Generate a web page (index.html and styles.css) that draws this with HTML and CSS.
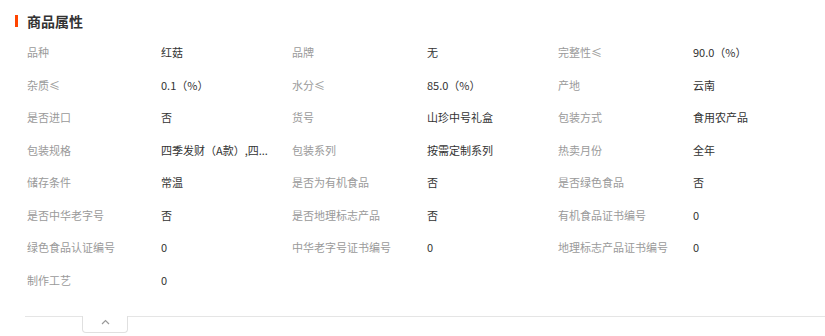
FILE: index.html
```html
<!DOCTYPE html>
<html lang="zh">
<head>
<meta charset="utf-8">
<link rel="stylesheet" href="styles.css">
</head>
<body>
<div class="attrs">
  <h2 class="title">商品属性</h2>
  <div class="grid">
    <div class="k">品种</div><div class="v">红菇</div>
    <div class="k">品牌</div><div class="v">无</div>
    <div class="k">完整性≤</div><div class="v">90.0（%）</div>

    <div class="k">杂质≤</div><div class="v">0.1（%）</div>
    <div class="k">水分≤</div><div class="v">85.0（%）</div>
    <div class="k">产地</div><div class="v">云南</div>

    <div class="k">是否进口</div><div class="v">否</div>
    <div class="k">货号</div><div class="v">山珍中号礼盒</div>
    <div class="k">包装方式</div><div class="v">食用农产品</div>

    <div class="k">包装规格</div><div class="v">四季发财（A款）,四...</div>
    <div class="k">包装系列</div><div class="v">按需定制系列</div>
    <div class="k">热卖月份</div><div class="v">全年</div>

    <div class="k">储存条件</div><div class="v">常温</div>
    <div class="k">是否为有机食品</div><div class="v">否</div>
    <div class="k">是否绿色食品</div><div class="v">否</div>

    <div class="k">是否中华老字号</div><div class="v">否</div>
    <div class="k">是否地理标志产品</div><div class="v">否</div>
    <div class="k">有机食品证书编号</div><div class="v">0</div>

    <div class="k">绿色食品认证编号</div><div class="v">0</div>
    <div class="k">中华老字号证书编号</div><div class="v">0</div>
    <div class="k">地理标志产品证书编号</div><div class="v">0</div>

    <div class="k">制作工艺</div><div class="v">0</div>
  </div>
  <div class="fold">
    <button class="fold-btn" type="button" aria-label="收起">
      <svg width="9" height="6" viewBox="0 0 9 6"><path d="M1 5 L4.5 1.5 L8 5" fill="none" stroke="#999" stroke-width="1.2"/></svg>
    </button>
  </div>
</div>
</body>
</html>
```

FILE: styles.css
```css
html, body {
  margin: 0;
  padding: 0;
  background: #fff;
}

body {
  font-family: "Noto Sans CJK SC", "Noto Sans", "Liberation Sans", sans-serif;
  width: 825px;
  height: 336px;
  overflow: hidden;
}

.attrs {
  padding-top: 15px;
}

.title {
  margin: 0 0 0 15px;
  padding-left: 9px;
  border-left: 3px solid #ff4400;
  font-size: 14px;
  line-height: 12px;
  height: 12px;
  font-weight: bold;
  color: #333;
}

.grid {
  display: grid;
  grid-template-columns: 134px 131px 135px 131px 135px 1fr;
  grid-auto-rows: 32.5px;
  align-items: center;
  padding-left: 27px;
  margin-top: 9px;
  font-size: 11px;
  line-height: 16px;
}

.k {
  color: #9a9a9a;
  white-space: nowrap;
}

.v {
  color: #333;
  white-space: nowrap;
}

.fold {
  margin-top: 20px;
  margin-left: 25px;
  border-top: 1px solid #e5e5e5;
  padding-left: 57px;
}

.fold-btn {
  display: flex;
  align-items: flex-start;
  justify-content: center;
  box-sizing: border-box;
  width: 46px;
  height: 17px;
  padding: 3px 0 0;
  margin: -1px 0 0;
  background: #fff;
  border: 1px solid #e0e0e0;
  border-top: none;
  border-radius: 0 0 4px 4px;
  cursor: pointer;
}
```
